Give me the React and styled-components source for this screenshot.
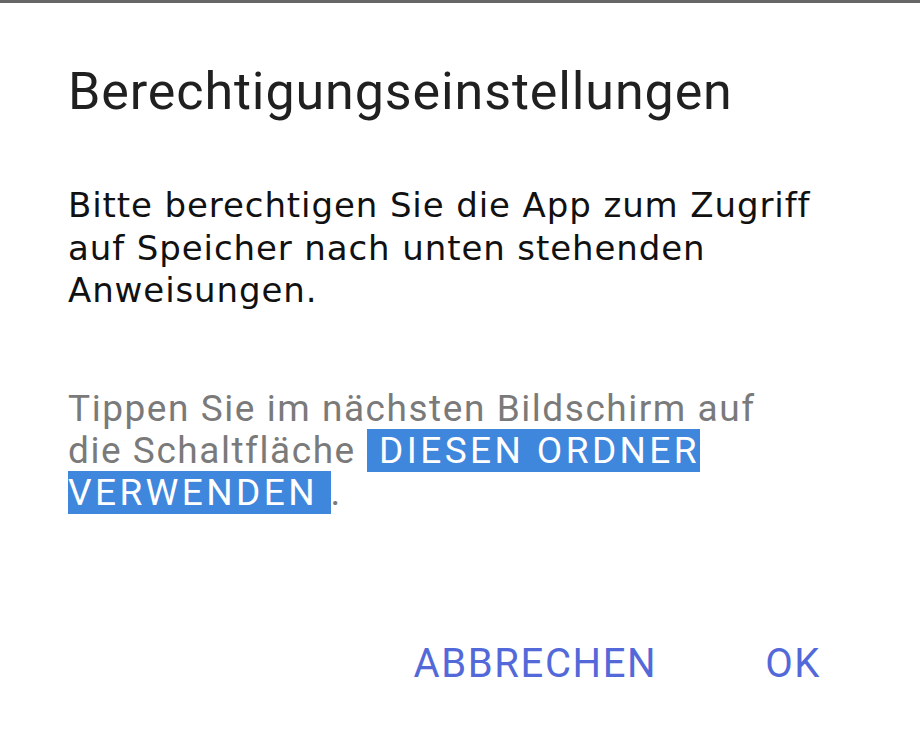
import React from "react";
import styled, { createGlobalStyle } from "styled-components";

const Global = createGlobalStyle`
  html, body { margin: 0; padding: 0; background: #fff; }
  body { font-family: Roboto, "Noto Sans", sans-serif; -webkit-font-smoothing: antialiased; }
`;

const Dialog = styled.div`
  width: 920px;
  height: 752px;
  box-sizing: border-box;
  border-top: 3px solid #676767;
  background: #fff;
  display: flex;
  flex-direction: column;
  padding: 59px 99px 0 68px;
  overflow: hidden;
`;

const Title = styled.h1`
  margin: 0;
  font-family: Roboto, sans-serif;
  font-weight: 400;
  font-size: 52px;
  line-height: 60px;
  letter-spacing: 0.9px;
  color: #202020;
`;

const Message = styled.p`
  margin: 62px 0 0;
  font-family: "DejaVu Sans", "Open Sans", sans-serif;
  font-size: 34px;
  line-height: 42.5px;
  letter-spacing: 0.9px;
  color: #111;
  max-width: ${(p) => p.$width}px;
`;

const Hint = styled.p`
  margin: 76px 0 0;
  font-family: Roboto, sans-serif;
  font-size: 37px;
  line-height: 42px;
  letter-spacing: 1.55px;
  color: #7a7a7a;
  max-width: ${(p) => p.$width}px;
`;

const Highlight = styled.span`
  background: #3f86dd;
  color: #fff;
  letter-spacing: 3.4px;
`;

const Actions = styled.div`
  margin-top: 126px;
  display: flex;
  justify-content: flex-end;
  gap: 108px;
`;

const ActionButton = styled.button`
  border: 0;
  background: none;
  padding: 0;
  font-family: Roboto, sans-serif;
  font-size: 40px;
  line-height: 48px;
  letter-spacing: 1.6px;
  color: #5469d9;
  cursor: pointer;
`;

export default function App() {
  return (
    <>
      <Global />
      <Dialog>
        <Title>Berechtigungseinstellungen</Title>
        <Message $width={770}>
          Bitte berechtigen Sie die App zum Zugriff auf Speicher nach unten stehenden Anweisungen.
        </Message>
        <Hint $width={715}>
          Tippen Sie im nächsten Bildschirm auf die Schaltfläche{" "}
          <Highlight>{"\u00a0DIESEN ORDNER VERWENDEN\u00a0"}</Highlight>.
        </Hint>
        <Actions>
          <ActionButton>ABBRECHEN</ActionButton>
          <ActionButton>OK</ActionButton>
        </Actions>
      </Dialog>
    </>
  );
}
